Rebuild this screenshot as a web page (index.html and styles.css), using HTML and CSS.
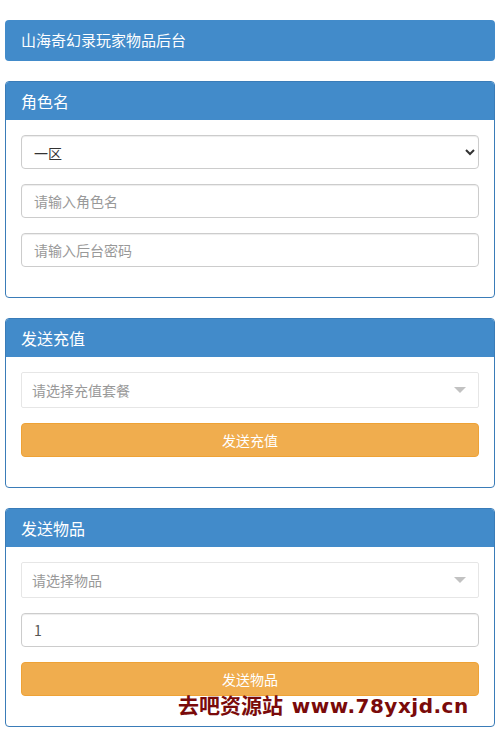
FILE: index.html
```html
<!DOCTYPE html>
<html lang="zh-CN">
<head>
    <meta charset="UTF-8">
    <title>山海奇幻录玩家物品后台</title>
    <link rel="stylesheet" href="styles.css">
</head>
<body>
<div class="page">
    <div class="topbar">山海奇幻录玩家物品后台</div>

    <div class="panel">
        <div class="panel-heading">角色名</div>
        <div class="panel-body">
            <div class="form-group">
                <select class="form-control">
                    <option>一区</option>
                </select>
            </div>
            <div class="form-group">
                <input class="form-control" type="text" placeholder="请输入角色名">
            </div>
            <div class="form-group">
                <input class="form-control" type="password" placeholder="请输入后台密码">
            </div>
        </div>
    </div>

    <div class="panel">
        <div class="panel-heading">发送充值</div>
        <div class="panel-body">
            <div class="form-group">
                <div class="select-box">
                    <span class="select-text">请选择充值套餐</span>
                    <span class="select-arrow"></span>
                </div>
            </div>
            <div class="form-group">
                <button class="btn">发送充值</button>
            </div>
        </div>
    </div>

    <div class="panel">
        <div class="panel-heading">发送物品</div>
        <div class="panel-body">
            <div class="form-group">
                <div class="select-box">
                    <span class="select-text">请选择物品</span>
                    <span class="select-arrow"></span>
                </div>
            </div>
            <div class="form-group">
                <input class="form-control" type="text" value="1">
            </div>
            <div class="form-group">
                <button class="btn">发送物品</button>
            </div>
        </div>
    </div>
</div>
<div class="watermark">去吧资源站 <span class="wm-url">www.78yxjd.cn</span></div>
</body>
</html>
```

FILE: styles.css
```css
html, body {
    margin: 0;
    background: #fff;
    font-family: "Microsoft YaHei", "Noto Sans CJK SC", "Liberation Sans", sans-serif;
    font-size: 14px;
    color: #333;
}

.page {
    padding: 20px 5px 0;
}

.topbar {
    height: 41px;
    line-height: 40px;
    padding: 0 16px;
    background: #428bca;
    color: #fff;
    font-size: 15px;
    border-radius: 4px;
    margin-bottom: 20px;
}

.panel {
    border: 1px solid #3a7cb8;
    border-radius: 4px;
    margin-bottom: 20px;
    background: #fff;
    overflow: hidden;
}

.panel-heading {
    height: 38px;
    line-height: 38px;
    padding: 0 15px;
    background: #428bca;
    color: #fff;
    font-size: 16px;
}

.panel-body {
    padding: 15px 15px 0;
}

.form-group {
    margin-bottom: 15px;
}

.panel-body .form-group:last-child {
    margin-bottom: 30px;
}

.form-control {
    display: block;
    box-sizing: border-box;
    width: 100%;
    height: 34px;
    padding: 6px 12px;
    font-size: 14px;
    font-family: inherit;
    color: #555;
    background: #fff;
    border: 1px solid #ccc;
    border-radius: 4px;
    box-shadow: inset 0 1px 1px rgba(0, 0, 0, .075);
}

.form-control::placeholder {
    color: #999;
}

select.form-control {
    color: #333;
    padding: 6px 8px;
}

.select-box {
    box-sizing: border-box;
    height: 36px;
    border: 1px solid #e6e6e6;
    border-radius: 2px;
    display: flex;
    align-items: center;
    justify-content: space-between;
    padding: 0 12px 0 10px;
    background: #fff;
}

.select-text {
    color: #999;
    font-size: 14px;
}

.select-arrow {
    width: 0;
    height: 0;
    border-left: 6px solid transparent;
    border-right: 6px solid transparent;
    border-top: 6px solid #c2c2c2;
}

.btn {
    display: block;
    width: 100%;
    height: 34px;
    border: 1px solid #eea236;
    border-radius: 4px;
    background: #f0ad4e;
    color: #fff;
    font-size: 14px;
    font-family: inherit;
    cursor: pointer;
}

.watermark {
    position: absolute;
    left: 178px;
    top: 689px;
    color: #7a0a0a;
    font-weight: bold;
    font-size: 21px;
    white-space: nowrap;
}

.wm-url {
    margin-left: 4px;
    font-family: "DejaVu Sans", sans-serif;
    font-size: 20px;
    letter-spacing: 0.5px;
}
```
